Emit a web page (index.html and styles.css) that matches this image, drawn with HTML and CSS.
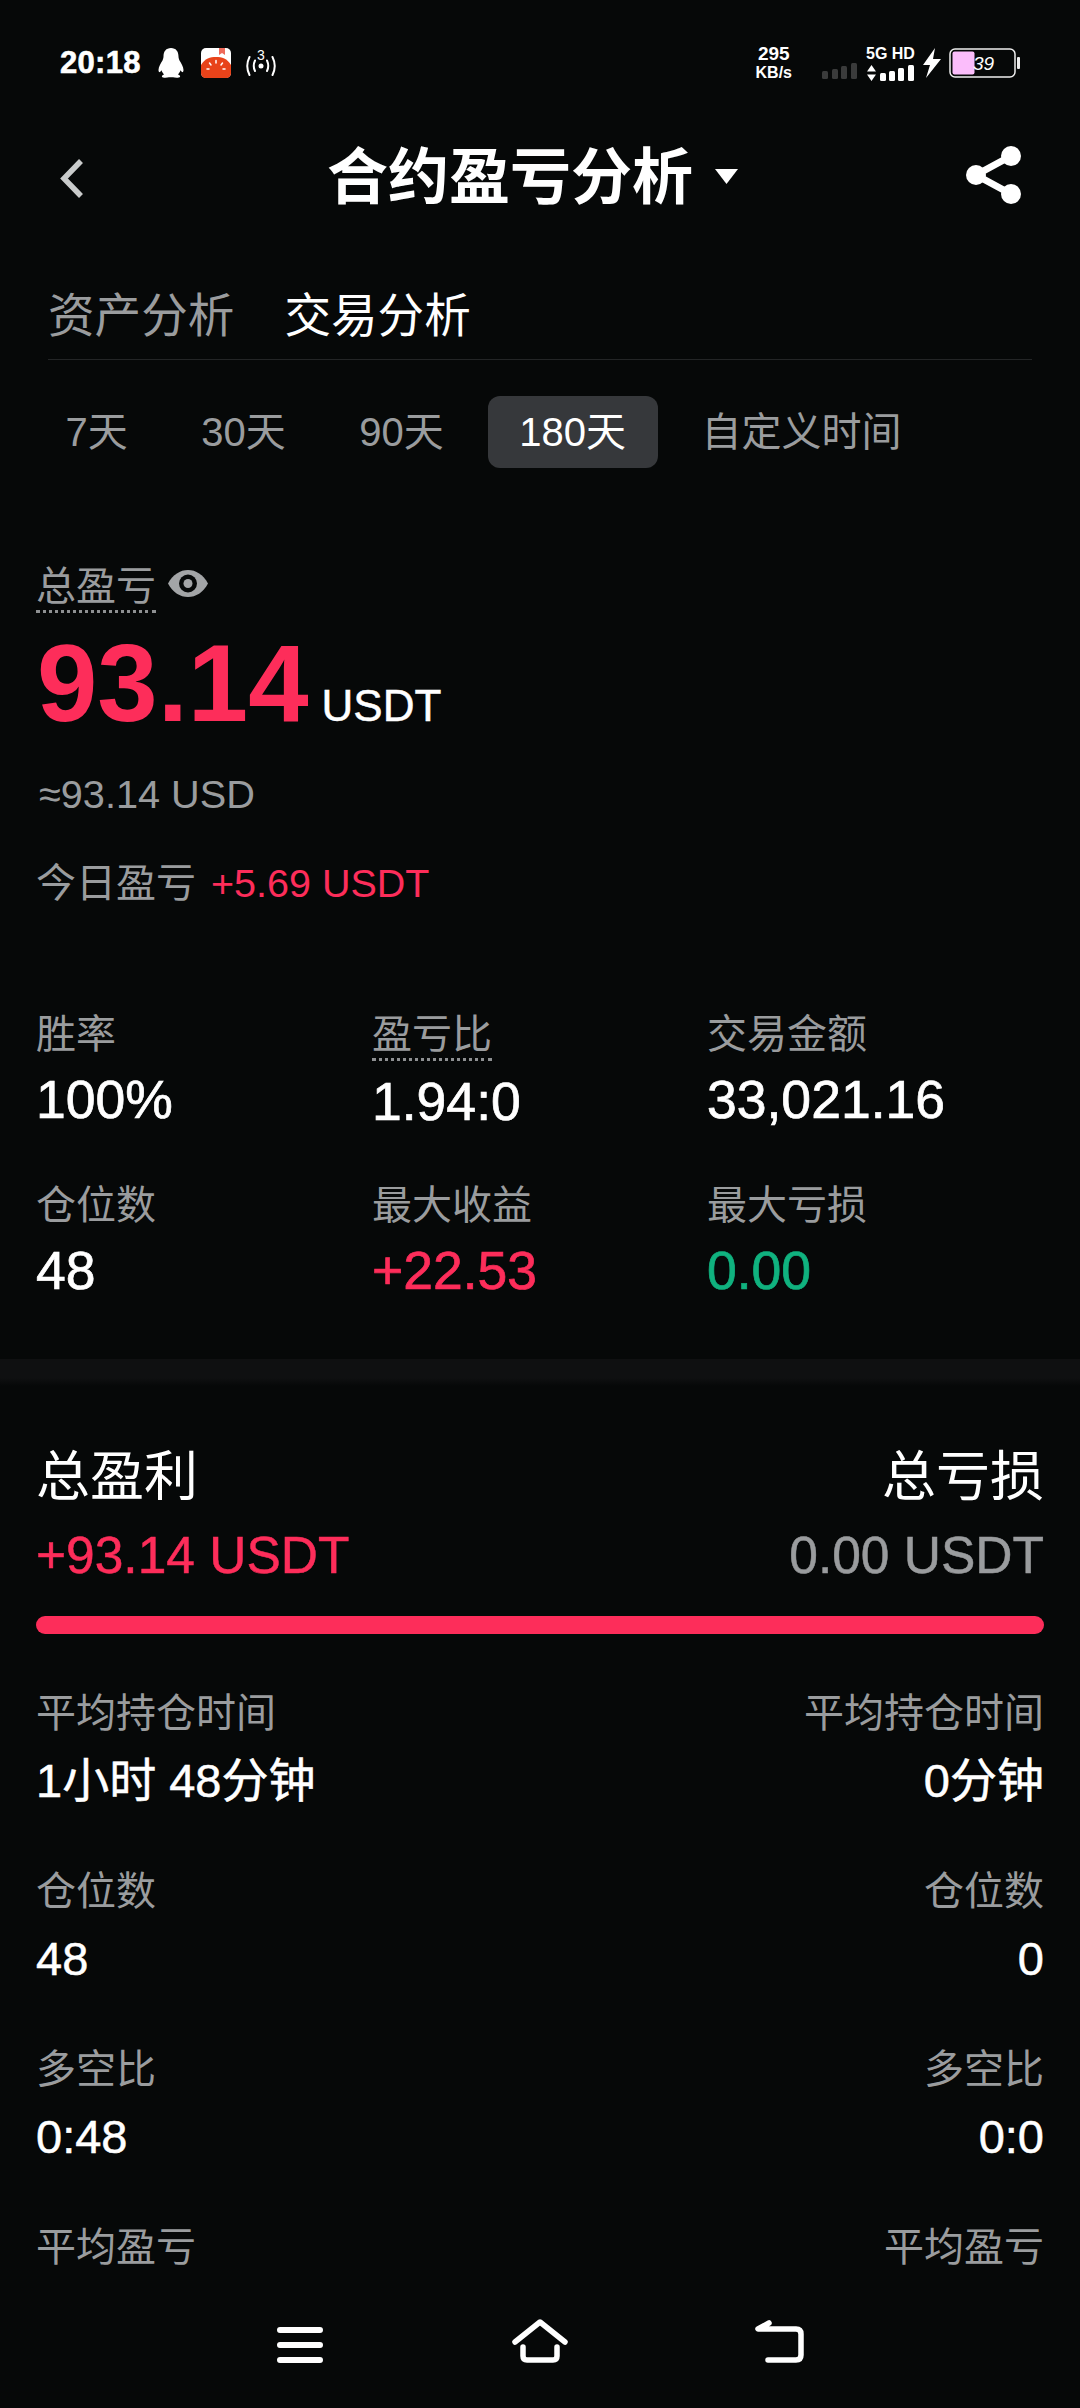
FILE: index.html
```html
<!DOCTYPE html>
<html lang="zh-CN">
<head>
  <meta charset="UTF-8">
  <meta name="viewport" content="width=device-width, initial-scale=1.0">
  <title>合约盈亏分析</title>
  <link rel="stylesheet" href="styles.css">
</head>
<body>
  <div class="screen">
    <div class="status-bar">
      <span class="clock">20:18</span>
      <svg class="icon-qq" width="26" height="30" viewBox="0 0 26 30"><path fill="#fff" d="M13 0C8 0 5.500 3.500 5.500 8.500C5.500 10 5 11 4.500 12.500C3 15 0.500 18.500 0.500 22C0.500 23.500 1 24.500 2 24C2.500 23.800 3 23 3.500 22.300C4 24 5 25.500 6 26.500C4.500 27 3.500 27.800 4 29C4.500 30 9 30 11 29.300H15C17 30 21.500 30 22 29C22.500 27.800 21.500 27 20 26.500C21 25.500 22 24 22.500 22.300C23 23 23.500 23.800 24 24C25 24.500 25.500 23.500 25.500 22C25.500 18.500 23 15 21.500 12.500C21 11 20.500 10 20.500 8.500C20.500 3.500 18 0 13 0Z"/></svg>
      <svg class="icon-tomato" width="30" height="30" viewBox="0 0 30 30">
        <rect width="30" height="30" rx="5" fill="#fff"/>
        <path fill="#e8431a" d="M0 17C4 10.500 9 9 15 9C21 9 26 10.500 30 17V25C30 28 28 30 25 30H5C2 30 0 28 0 25Z"/>
        <path fill="#ee6a5a" d="M18 0H24V7L21 5L18 7Z"/>
        <path stroke="#fff" stroke-width="1.500" stroke-linecap="round" fill="none" d="M15 12.500V15M8.500 15L10 17M21.500 15L20 17M6 21H8M22 21H24"/>
      </svg>
      <svg class="icon-hotspot" width="30" height="32" viewBox="0 0 30 32">
        <circle cx="15" cy="19" r="2.500" fill="#fff"/>
        <path fill="none" stroke="#fff" stroke-width="2" stroke-linecap="round" d="M9 13.500Q6.500 19 9 24M21 13.500Q23.500 19 21 24M3.500 10Q-1 19 3.500 28M26.500 10Q31 19 26.500 28"/>
        <text x="15" y="13" text-anchor="middle" class="hotspot-num">3</text>
      </svg>
      <div class="status-right">
        <div class="net-speed"><span>295</span><span class="net-unit">KB/s</span></div>
        <svg class="icon-signal" width="35" height="16" viewBox="0 0 35 16">
          <g fill="#3a3b3b"><rect y="8" width="6" height="8" rx="1.500"/><rect x="10" y="6" width="6" height="10" rx="1.500"/><rect x="19" y="3" width="6" height="13" rx="1.500"/><rect x="29" width="6" height="16" rx="1.500"/></g>
        </svg>
        <div class="net-type">
          <span>5G HD</span>
          <svg width="49" height="16" viewBox="0 0 49 16">
            <g fill="#fff">
              <path d="M1 6.500L5.500 0L10 6.500ZM1 9.500H10L5.500 16Z"/>
              <rect x="14" y="8" width="6" height="8" rx="1.500"/><rect x="23" y="6" width="6" height="10" rx="1.500"/><rect x="32" y="3" width="6" height="13" rx="1.500"/><rect x="42" width="6" height="16" rx="1.500"/>
            </g>
          </svg>
        </div>
        <svg class="icon-bolt" width="18" height="30" viewBox="0 0 18 30"><path fill="#fff" d="M12 0L0 17H7L3 30L18 11H10Z"/></svg>
        <svg class="icon-battery" width="71" height="30" viewBox="0 0 71 30">
          <rect x="1" y="1" width="65" height="28" rx="5" fill="none" stroke="#eee" stroke-width="1.500"/>
          <rect x="3.500" y="3.500" width="22" height="23" rx="2" fill="#fbbdfb"/>
          <rect x="68" y="9" width="3" height="12" rx="1" fill="#eee"/>
          <text x="24" y="22" class="battery-num">39</text>
        </svg>
      </div>
    </div>

    <header class="title-bar">
      <svg class="back-icon" width="23" height="39" viewBox="0 0 23 39"><path fill="none" stroke="#c9cbcb" stroke-width="5.500" d="M21 2L4 19.500L21 37"/></svg>
      <div class="title-group">
        <h1>合约盈亏分析</h1>
        <svg class="title-caret" width="23" height="15" viewBox="0 0 23 15"><path fill="#fff" d="M0 0H23L11.500 15Z"/></svg>
      </div>
      <svg class="share-icon" width="58" height="58" viewBox="0 0 58 58">
        <path fill="none" stroke="#fff" stroke-width="7" d="M46 10L11 29L46 48"/>
        <circle cx="46" cy="10" r="10" fill="#fff"/><circle cx="11" cy="29" r="10" fill="#fff"/><circle cx="46" cy="48" r="10" fill="#fff"/>
      </svg>
    </header>

    <nav class="tabs">
      <span class="tab">资产分析</span>
      <span class="tab active">交易分析</span>
    </nav>

    <div class="periods">
      <span class="period">7天</span>
      <span class="period">30天</span>
      <span class="period">90天</span>
      <span class="period active">180天</span>
      <span class="period">自定义时间</span>
    </div>

    <main class="content">
      <section class="summary">
        <div class="summary-label">
          <span class="dotted">总盈亏</span>
          <svg width="40" height="27" viewBox="0 0 40 27">
            <path fill="#a3a5a7" d="M0 13.500C5 4.500 12 0 20 0C28 0 35 4.500 40 13.500C35 22.500 28 27 20 27C12 27 5 22.500 0 13.500Z"/>
            <circle cx="20" cy="13.500" r="9" fill="#060808"/><circle cx="20" cy="13.500" r="4.500" fill="#a3a5a7"/>
          </svg>
        </div>
        <div class="total"><span class="total-num">93.14</span><span class="total-unit">USDT</span></div>
        <div class="approx">≈93.14 USD</div>
        <div class="today">今日盈亏<span class="today-num">+5.69 USDT</span></div>
      </section>

      <section class="stats">
        <div><div class="label">胜率</div><div class="value">100%</div></div>
        <div><div class="label"><span class="dotted">盈亏比</span></div><div class="value">1.94:0</div></div>
        <div><div class="label">交易金额</div><div class="value">33,021.16</div></div>
        <div><div class="label">仓位数</div><div class="value">48</div></div>
        <div><div class="label">最大收益</div><div class="value red">+22.53</div></div>
        <div><div class="label">最大亏损</div><div class="value green">0.00</div></div>
      </section>

      <div class="band"></div>

      <section class="pnl">
        <div class="pnl-head">
          <div><div class="pnl-title">总盈利</div><div class="pnl-sum red">+93.14 USDT</div></div>
          <div class="right"><div class="pnl-title">总亏损</div><div class="pnl-sum grey">0.00 USDT</div></div>
        </div>
        <div class="pnl-bar"></div>
        <div class="pnl-rows">
          <div><div class="label">平均持仓时间</div><div class="pnl-value">1小时 48分钟</div></div>
          <div class="right"><div class="label">平均持仓时间</div><div class="pnl-value">0分钟</div></div>
          <div><div class="label">仓位数</div><div class="pnl-value">48</div></div>
          <div class="right"><div class="label">仓位数</div><div class="pnl-value">0</div></div>
          <div><div class="label">多空比</div><div class="pnl-value">0:48</div></div>
          <div class="right"><div class="label">多空比</div><div class="pnl-value">0:0</div></div>
          <div><div class="label">平均盈亏</div></div>
          <div class="right"><div class="label">平均盈亏</div></div>
        </div>
      </section>
    </main>

    <div class="system-nav">
      <svg width="60" height="60" viewBox="0 0 60 60"><path fill="none" stroke="#fff" stroke-width="6" stroke-linecap="round" d="M10 17H50M10 32H50M10 47H50"/></svg>
      <svg width="60" height="60" viewBox="0 0 60 60"><path fill="none" stroke="#fff" stroke-width="5.500" stroke-linecap="round" stroke-linejoin="round" d="M5 29L30 9L55 29M13 34V43Q13 47 17 47H43Q47 47 47 43V34"/></svg>
      <svg width="60" height="60" viewBox="0 0 60 60"><path fill="none" stroke="#fff" stroke-width="5.500" stroke-linecap="round" stroke-linejoin="round" d="M19 10L8 16H46Q51 16 51 21V42Q51 47 46 47H18"/></svg>
    </div>
  </div>
</body>
</html>
```

FILE: styles.css
```css
:root {
  --bg: #060808;
  --text: #fff;
  --muted: #9a9c9e;
  --red: #fd2d5a;
  --green: #10b27f;
  --pill: #36383b;
}
*, *::before, *::after { box-sizing: border-box; }
html, body { margin: 0; padding: 0; background: var(--bg); }
body {
  color: var(--text);
  font-family: "Liberation Sans", "Noto Sans CJK SC", sans-serif;
}
.screen {
  width: 1080px;
  height: 2408px;
  overflow: hidden;
  display: flex;
  flex-direction: column;
}

/* status bar */
.status-bar {
  height: 126px;
  flex: none;
  padding: 0 60px;
  display: flex;
  align-items: center;
}
.clock { font-size: 31px; font-weight: 700; letter-spacing: 0.3px; -webkit-text-stroke: 0.6px #fff; }
.icon-qq { margin-left: 17px; }
.icon-tomato { margin-left: 17px; }
.icon-hotspot { margin-left: 15px; }
.hotspot-num { font-size: 14px; fill: #fff; }
.status-right { margin-left: auto; display: flex; align-items: center; }
.net-speed {
  display: flex;
  flex-direction: column;
  align-items: center;
  font-size: 19px;
  font-weight: 700;
  line-height: 19px;
}
.net-unit { font-size: 16px; }
.icon-signal { margin-left: 30px; margin-top: 16px; }
.net-type {
  margin-left: 9px;
  width: 49px;
  display: flex;
  flex-direction: column;
  font-size: 16px;
  font-weight: 700;
  line-height: 18px;
  white-space: nowrap;
  gap: 2px;
}
.net-type svg { display: block; }
.icon-bolt { margin-left: 8px; }
.icon-battery { margin-left: 8px; }
.battery-num { font-size: 19px; font-weight: 400; fill: #fff; font-style: italic; }

/* title */
.title-bar {
  height: 104px;
  flex: none;
  padding: 0 57px 0 60px;
  display: flex;
  align-items: center;
}
.title-group { margin-left: 244px; display: flex; align-items: center; gap: 22px; }
.title-caret { margin-bottom: 4px; }
h1 { margin: 0; font-size: 61px; font-weight: 700; line-height: 80px; white-space: nowrap; }
.share-icon { margin: 0 0 6px auto; }

/* tabs */
.tabs {
  flex: none;
  margin: 0 48px;
  padding: 56px 0 13px;
  display: flex;
  gap: 50px;
  border-bottom: 1px solid #232526;
}
.tab { font-size: 46.6px; line-height: 60px; color: var(--muted); }
.tab.active { color: var(--text); }

.periods { flex: none; margin: 36px 0 0 34px; display: flex; gap: 10.500px; }
.period {
  height: 72px;
  padding: 0 31.5px;
  font-size: 40px;
  line-height: 72px;
  color: var(--muted);
  border-radius: 12px;
}
.period.active { margin: 0 2px; background: var(--pill); color: var(--text); }

/* content */
.content { flex: 1; min-height: 0; overflow: hidden; }
.summary { padding: 94px 36px 0; }
.summary-label {
  display: flex;
  align-items: flex-start;
  gap: 12px;
  font-size: 40px;
  line-height: 48px;
  color: var(--muted);
}
.summary-label svg { margin-top: 8px; }
.dotted { display: inline-block; border-bottom: 3px dotted #8e9092; }
.total { margin-top: 11px; display: flex; align-items: baseline; line-height: 120px; gap: 13px; }
.total-num { font-size: 108.5px; font-weight: 700; color: var(--red); margin-left: 1px; }
.total-unit { font-size: 44px; -webkit-text-stroke: 0.5px #fff; }
.approx { margin: 3px 0 0 3px; font-size: 39.7px; line-height: 50px; color: var(--muted); }
.today { margin-top: 39px; font-size: 40px; line-height: 50px; color: var(--muted); }
.today-num { margin-left: 15px; font-size: 39.5px; color: var(--red); }

.stats {
  margin-top: 101px;
  padding-left: 36px;
  display: grid;
  grid-template-columns: 336px 335px 1fr;
  row-gap: 48px;
}
.label { font-size: 40px; line-height: 50px; color: var(--muted); }
.label .dotted { line-height: 48px; }
.value {
  margin-top: 11px;
  font-size: 53.5px;
  line-height: 60px;
  -webkit-text-stroke: 0.7px currentColor;
}
.red { color: var(--red); }
.green { color: var(--green); }
.grey { color: var(--muted); }
.right { text-align: right; }

.band {
  height: 27px;
  margin-top: 58px;
  background: linear-gradient(#0f1011 70%, var(--bg));
}

.pnl { padding: 56px 36px 0; }
.pnl-head { display: flex; justify-content: space-between; }
.pnl-title { font-size: 54px; line-height: 70px; }
.pnl-sum { margin-top: 13px; font-size: 51.5px; line-height: 60px; -webkit-text-stroke: 0.5px currentColor; }
.pnl-bar { height: 18px; margin-top: 31px; border-radius: 9px; background: var(--red); }
.pnl-rows {
  margin-top: 54px;
  display: grid;
  grid-template-columns: 1fr 1fr;
  row-gap: 55px;
}
.pnl-value {
  margin-top: 13px;
  font-size: 47px;
  line-height: 60px;
  -webkit-text-stroke: 0.5px currentColor;
}

/* android nav */
.system-nav {
  height: 120px;
  flex: none;
  padding-top: 25px;
  display: flex;
  justify-content: center;
  gap: 180px;
  background: var(--bg);
}
```
